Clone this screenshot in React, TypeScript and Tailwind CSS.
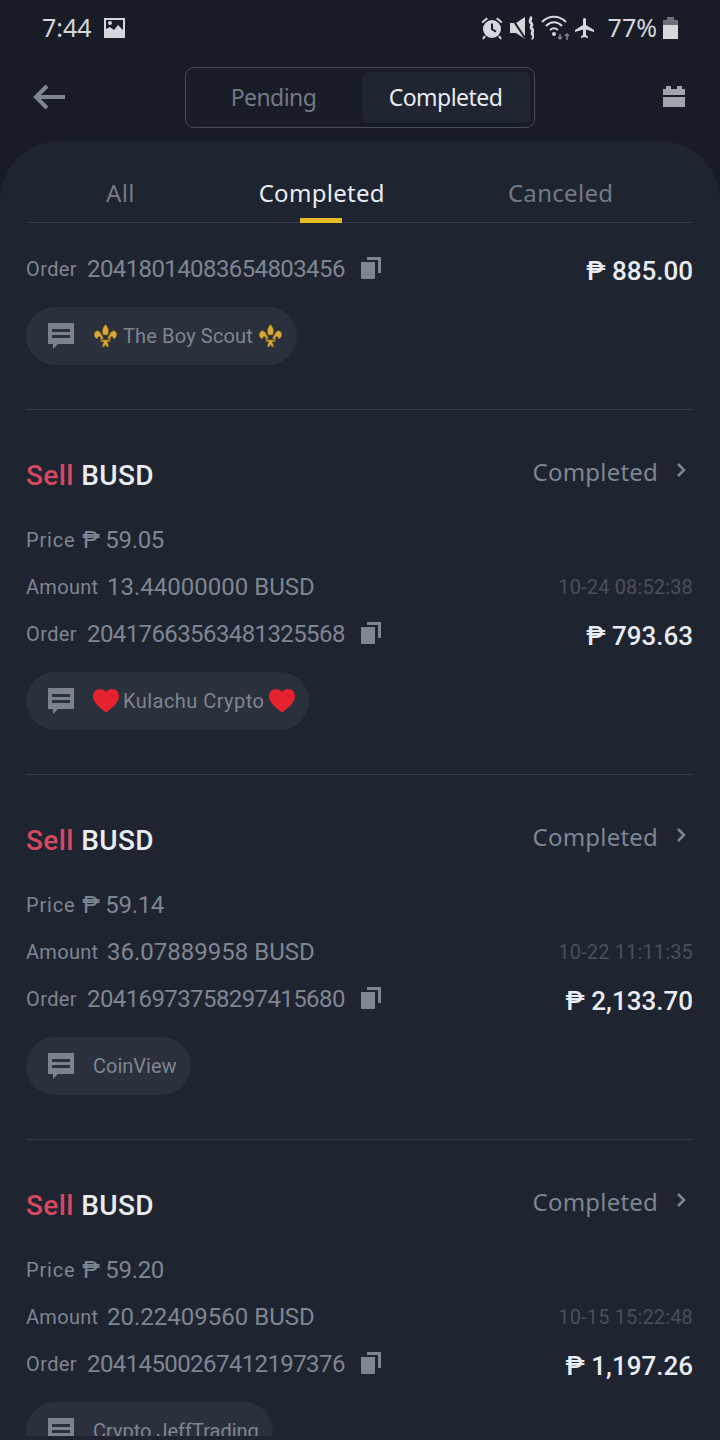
const orders = [
  {
    price: "59.05",
    amount: "13.44000000",
    date: "10-24 08:52:38",
    id: "20417663563481325568",
    total: "793.63",
    name: "Kulachu Crypto",
    badge: "heart",
  },
  {
    price: "59.14",
    amount: "36.07889958",
    date: "10-22 11:11:35",
    id: "20416973758297415680",
    total: "2,133.70",
    name: "CoinView",
    badge: "",
  },
  {
    price: "59.20",
    amount: "20.22409560",
    date: "10-15 15:22:48",
    id: "20414500267412197376",
    total: "1,197.26",
    name: "Crypto JeffTrading",
    badge: "",
  },
];

function ChatIcon() {
  return (
    <svg width="28" height="28" viewBox="0 0 28 28" className="shrink-0">
      <path d="M1 1h26v21H11l-5 5v-5H1z" fill="#7c8390" />
      <path d="M5 7h18v3H5zM5 13h18v3H5z" fill="#2a303c" />
    </svg>
  );
}

function CopyIcon() {
  return (
    <svg width="20" height="22" viewBox="0 0 20 22" className="shrink-0">
      <path d="M6 0h14v16h-3V3H6z" fill="#7f8692" />
      <path d="M0 5h14v16a1 1 0 0 1-1 1H1a1 1 0 0 1-1-1z" fill="#7f8692" />
    </svg>
  );
}

function Fleur() {
  return (
    <svg width="25" height="26" viewBox="0 0 26 26" className="shrink-0">
      <path
        d="M13 1c3 3 4 6 2.500 11h-5C9 7 10 4 13 1zM9 12C8 8 4 6 2 9c-2 3 0 7 3 7 0-2 1-3 2.500-2 1 .7.500 2-.500 2l3 1c1-1 .500-4-1-5zM17 12c1-4 5-6 7-3 2 3 0 7-3 7 0-2-1-3-2.500-2-1 .7-.500 2 .500 2l-3 1c-1-1-.500-4 1-5zM8 17h10v2h-3l1.500 5c-1.500 1-2.500 0-3.500-2-1 2-2 3-3.500 2L11 19H8z"
        fill="#d9a93c"
        stroke="#6e4f14"
        strokeWidth="0.7"
      />
    </svg>
  );
}

function Heart() {
  return (
    <svg width="26" height="24" viewBox="0 0 26 24" className="shrink-0">
      <path
        d="M13 23.500C7 18.500 0 14 0 7.500 0 3 3 0 7 0c2.700 0 4.900 1.300 6 3.500C14.100 1.300 16.300 0 19 0c4 0 7 3 7 7.500 0 6.500-7 11-13 16z"
        fill="#e6222f"
      />
    </svg>
  );
}

function Chip({ name, badge }: { name: string; badge: string }) {
  return (
    <div className="inline-flex h-[58px] items-center rounded-full bg-[#2a303c] pl-[21px] pr-[14px]">
      <ChatIcon />
      <div className="ml-[18px] flex items-center gap-[5px] text-[20px] text-[#7f8692]">
        {badge === "fleur" && <Fleur />}
        {badge === "heart" && <Heart />}
        <span className={badge === "heart" ? "-ml-[1px] tracking-[0.45px]" : badge === "fleur" ? "tracking-[0.15px]" : ""}>{name}</span>
        {badge === "fleur" && <Fleur />}
        {badge === "heart" && <Heart />}
      </div>
    </div>
  );
}

function OrderRow({ id, total }: { id: string; total: string }) {
  return (
    <div className="flex h-[36px] items-center justify-between">
      <div className="flex items-center">
        <span className="w-[61px] text-[20px] tracking-[0.4px] text-[#7f8692]">Order</span>
        <span className="text-[24px] tracking-[-0.6px] text-[#7f8692]">{id}</span>
        <span className="-mt-[2px] ml-[16px]">
          <CopyIcon />
        </span>
      </div>
      <span className="mt-[5px] text-[26px] font-medium text-[#e9ecf2]">₱ {total}</span>
    </div>
  );
}

export default function App() {
  return (
    <div className="relative h-[1440px] w-[720px] overflow-hidden bg-[#181c27] font-['Roboto',sans-serif]">
      {/* status bar */}
      <div className="flex h-[55px] items-center justify-between pl-[42px] pr-[42px] pt-[1px] text-[#d5d7da]">
        <div className="flex items-center gap-[12px]">
          <span className="font-['Noto_Sans',sans-serif] text-[25px]">7:44</span>
          <svg width="21" height="20" viewBox="0 0 21 20">
            <path fillRule="evenodd" d="M0 0h21v20H0zM2 2v9l4-2 4 3 4-5 5 5V2zM6 3a2 2 0 1 1 0 4 2 2 0 0 1 0-4z" fill="#d5d7da" />
          </svg>
        </div>
        <div className="flex items-center">
          <svg width="24" height="24" viewBox="0 0 24 24">
            <path d="M22.500 5.700 17.400 1.400l-1.300 1.500 5.100 4.300zM7.900 2.900 6.600 1.400 1.500 5.700l1.300 1.500z" fill="#d5d7da" />
            <circle cx="12" cy="13" r="9" fill="#d5d7da" />
            <path d="M11 7.500h2v5.200l3.500 2.100-1 1.600L11 13.700z" fill="#181c27" />
            <path d="M5 20l-2 3M19 20l2 3" stroke="#d5d7da" strokeWidth="2" />
          </svg>
          <svg width="24" height="24" viewBox="0 0 24 24" className="ml-[6px]">
            <path d="M0 7h6l9-6v22l-9-6H0z" fill="#d5d7da" />
            <path d="M1 1l14 21" stroke="#181c27" strokeWidth="2" />
            <path d="M20 1c3 2-2 4 1 6s-2 4 1 6-2 4 1 6-1 3 0 4" fill="none" stroke="#d5d7da" strokeWidth="2.800" />
          </svg>
          <svg width="30" height="26" viewBox="0 0 30 26" className="ml-[7px]">
            <path d="M1 7c7-7 17-7 24 0M5 11c5-5 11-5 16 0M9 15c3-2.500 5-2.500 8 0" fill="none" stroke="#d5d7da" strokeWidth="2" />
            <circle cx="13" cy="19" r="2" fill="#d5d7da" />
            <path d="M19 19v5M17 22l2 2 2-2M26 25v-6M24 21l2-2 2 2" fill="none" stroke="#7f8692" strokeWidth="1.500" />
          </svg>
          <svg width="24" height="24" viewBox="0 0 24 24" className="ml-[2px]">
            <path d="M21 16v-2l-8-5V3.500c0-.83-.67-1.500-1.500-1.500S10 2.670 10 3.500V9l-8 5v2l8-2.500V19l-2 1.500V22l3.500-1 3.500 1v-1.500L13 19v-5.500z" fill="#d5d7da" />
          </svg>
          <span className="ml-[11px] font-['Noto_Sans',sans-serif] text-[25px]">77%</span>
          <svg width="15" height="22" viewBox="0 0 15 22" className="ml-[6px]">
            <path d="M4 0h7v3h4v5H0V3h4z" fill="#6d7076" />
            <path d="M0 8h15v14H0z" fill="#d5d7da" />
          </svg>
        </div>
      </div>

      {/* header */}
      <div className="flex h-[86px] items-center justify-between pb-[2px] pl-[33px] pr-[35px]">
        <svg width="33" height="26" viewBox="0 0 33 26">
          <path d="M32 13H4M14 2 3 13l11 11" fill="none" stroke="#7f8692" strokeWidth="4" />
        </svg>
        <div className="-ml-[10px] flex h-[61px] w-[350px] items-center rounded-[9px] border border-[#454b57] pr-[4px] font-['Noto_Sans',sans-serif] text-[23px] tracking-[-0.55px]">
          <div className="flex-1 text-center text-[#727a87]">Pending</div>
          <div className="flex h-[51px] w-[168px] items-center justify-center rounded-[6px] bg-[#1f2531] text-[#e9ecf2]">
            Completed
          </div>
        </div>
        <svg width="22" height="22" viewBox="0 0 22 22">
          <path d="M3 0h5v3h6V0h5v3h3v6H0V3h3z" fill="#a0a4ad" />
          <path d="M0 11h22v10H0z" fill="#a0a4ad" />
        </svg>
      </div>

      {/* panel */}
      <div className="h-[1299px] overflow-hidden rounded-t-[60px] bg-[#1e2430] pl-[26px] pr-[27px]">
        <div className="relative ml-[2px] mr-[1px] flex h-[82px] items-center border-b border-[#363c48] pl-[78px] pt-[22px] font-['Noto_Sans',sans-serif] text-[24px] tracking-[0.3px]">
          <span className="text-[#727a87]">All</span>
          <span className="ml-[124px] text-[#e9ecf2]">Completed</span>
          <span className="ml-[123px] text-[#727a87]">Canceled</span>
          <div className="absolute bottom-[-1px] left-[272px] h-[5px] w-[42px] bg-[#e9bb23]" />
        </div>

        <div className="border-b border-[#363c48] pb-[44px] pt-[28px]">
          <OrderRow id="20418014083654803456" total="885.00" />
          <div className="mt-[20px]">
            <Chip name="The Boy Scout" badge="fleur" />
          </div>
        </div>

        {orders.map((o) => (
          <div key={o.id} className="border-b border-[#363c48] pb-[44px] pt-[48px]">
            <div className="flex h-[36px] items-center justify-between">
              <div className="text-[28px] font-medium tracking-[0.4px]">
                <span className="text-[#d9485f]">Sell</span> <span className="text-[#e9ecf2]">BUSD</span>
              </div>
              <div className="flex items-center pr-[7px] text-[#7f8692]">
                <span className="-mt-[9px] font-['Noto_Sans',sans-serif] text-[24px] tracking-[0.2px]">Completed</span>
                <svg width="10" height="14" viewBox="0 0 10 14" className="-mt-[13px] ml-[18px]">
                  <path d="M2 1l6 6-6 6" fill="none" stroke="#7f8692" strokeWidth="2.500" />
                </svg>
              </div>
            </div>
            <div className="mt-[28px] flex h-[36px] items-center text-[#7f8692]">
              <span className="text-[20px] tracking-[0.8px]">Price</span>
              <span className="ml-[7px] text-[24px] tracking-[-0.3px]">₱ {o.price}</span>
            </div>
            <div className="mt-[11px] flex h-[36px] items-center justify-between text-[#7f8692]">
              <div className="flex items-center">
                <span className="w-[81px] text-[20px] tracking-[0.3px]">Amount</span>
                <span className="text-[24px]">{o.amount} BUSD</span>
              </div>
              <span className="text-[20px] tracking-[0.15px] text-[#4a505c]">{o.date}</span>
            </div>
            <div className="mt-[11px]">
              <OrderRow id={o.id} total={o.total} />
            </div>
            <div className="mt-[20px]">
              <Chip name={o.name} badge={o.badge} />
            </div>
          </div>
        ))}
      </div>

      {/* nav bar edge covering the last chip */}
      <div className="absolute bottom-0 left-0 h-[4px] w-full bg-[#1e2430]" />
    </div>
  );
}
